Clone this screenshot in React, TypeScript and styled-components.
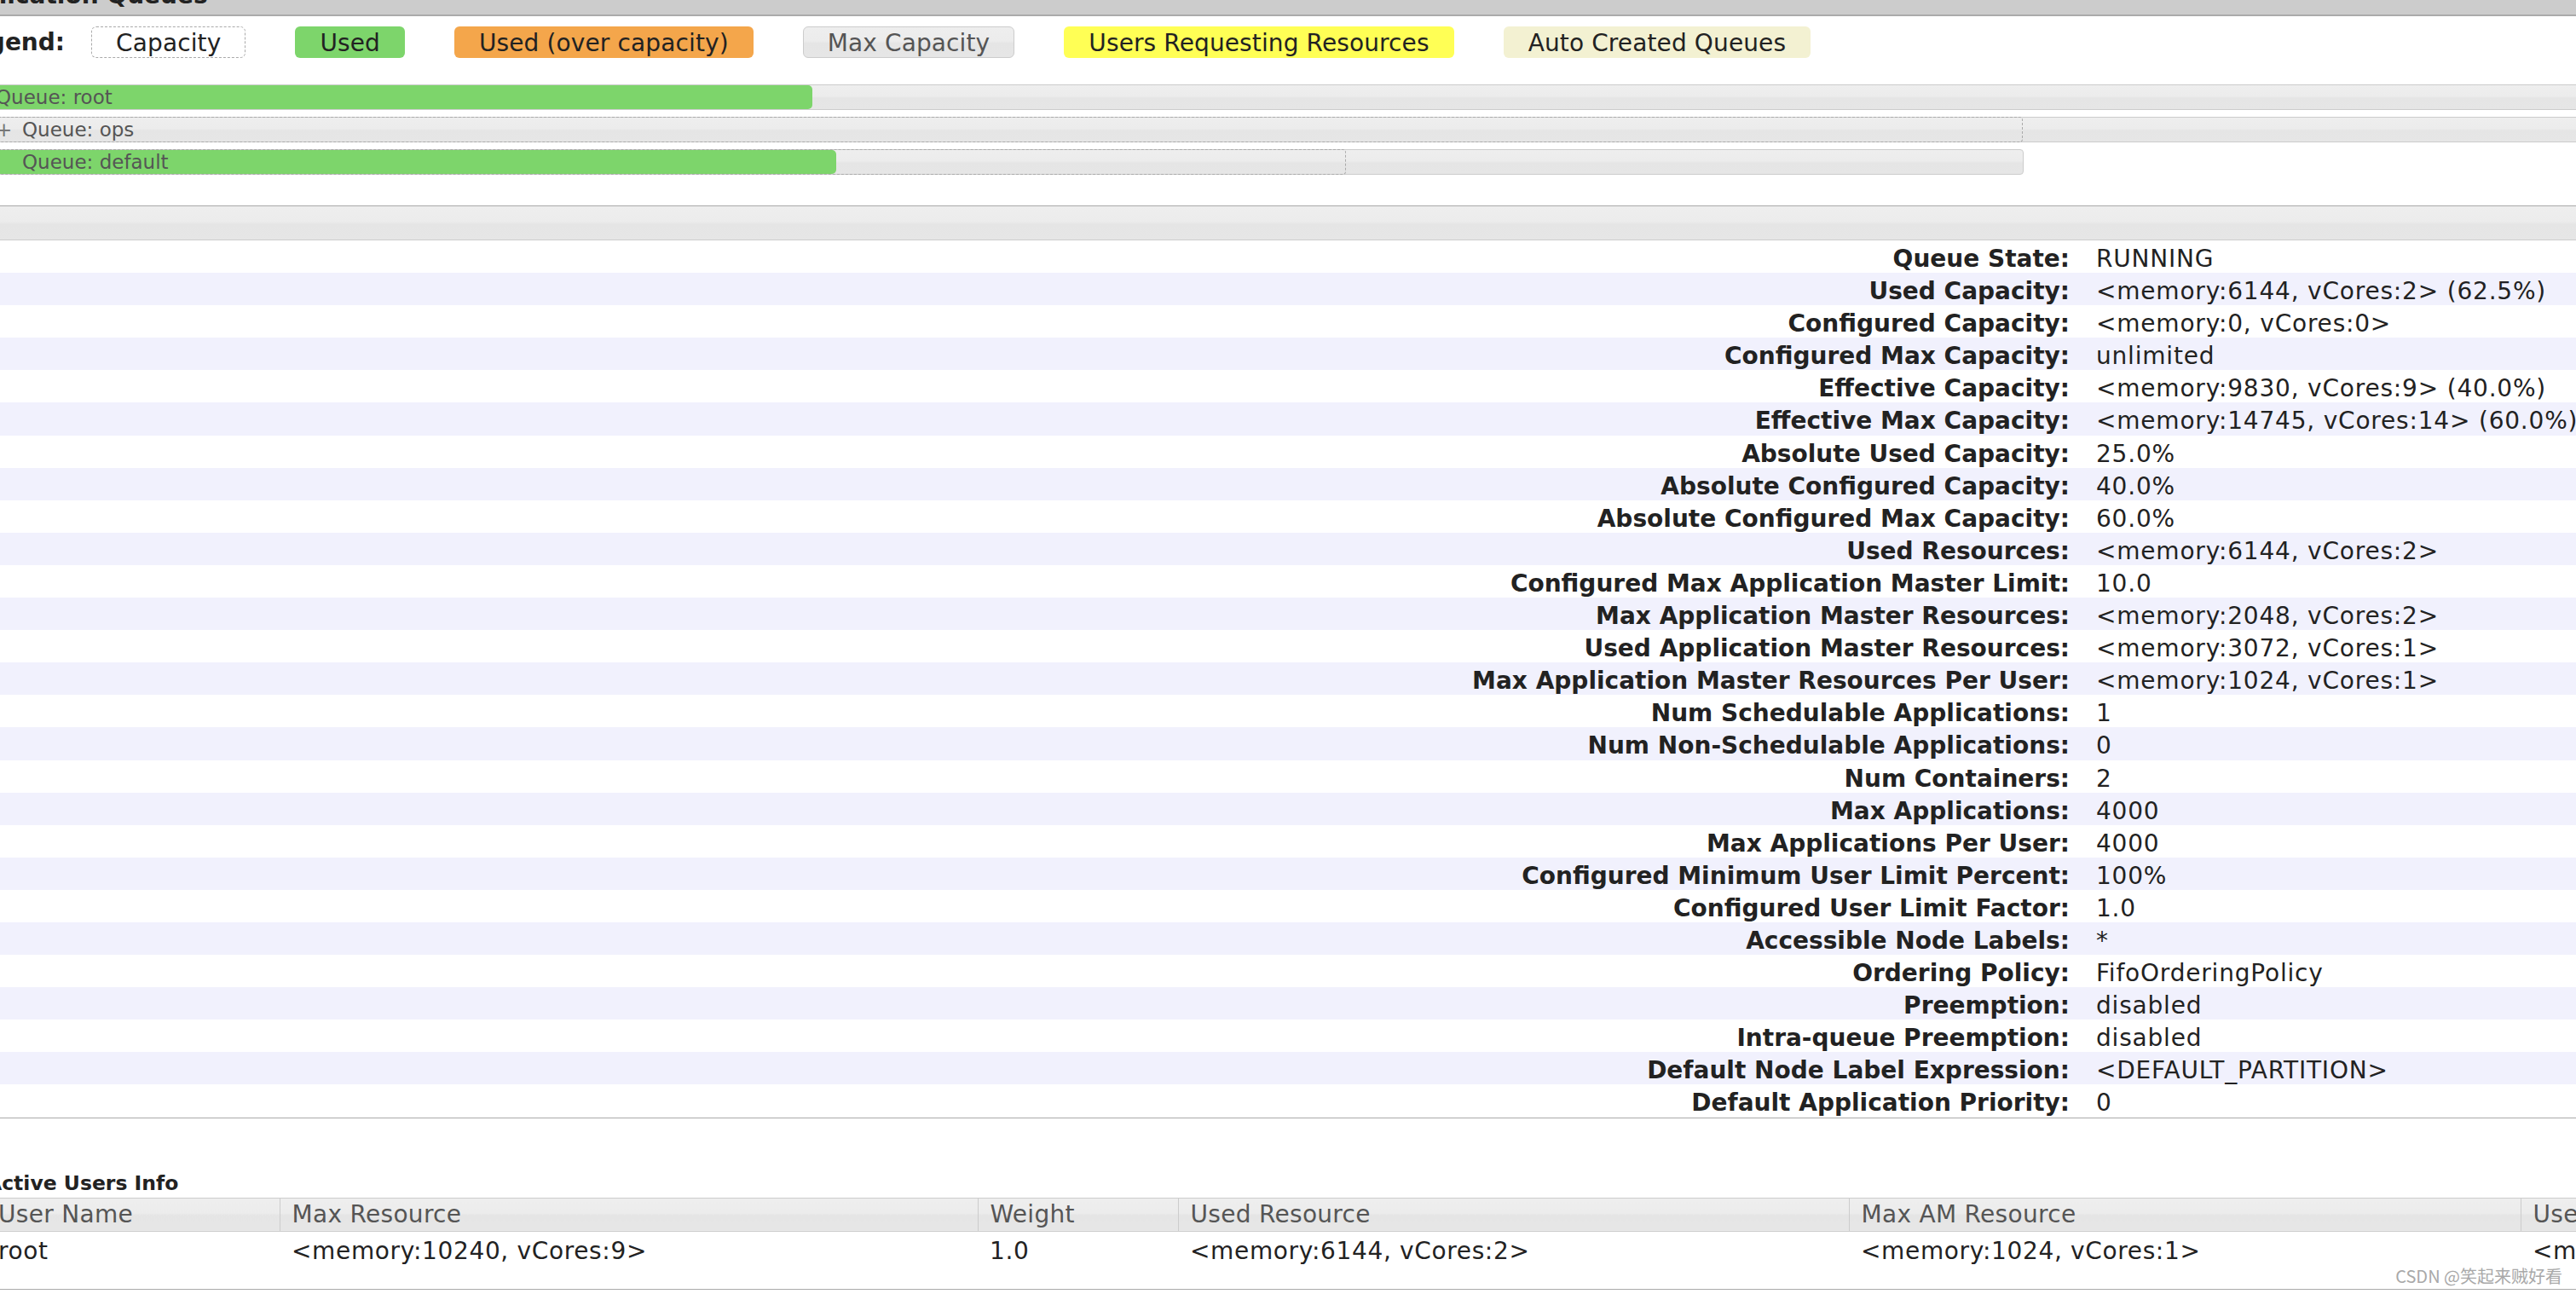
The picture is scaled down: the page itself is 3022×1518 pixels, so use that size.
import React from 'react';
import styled, { createGlobalStyle, css } from 'styled-components';

const fontFamily = '"DejaVu Sans", Verdana, "Noto Sans CJK SC", sans-serif';
const gray1 = '#222';
const gray2 = '#555';
const gray3 = '#777';
const borderLight = '#ccc';
const borderDark = '#aaa';
const green = '#7dd56b';
const stripe = '#f1f1fd';
const barGradient =
  'linear-gradient(to bottom, #eeeeee 0%, #ececec 46%, #e5e5e5 54%, #e6e6e6 100%)';

const GlobalStyle = createGlobalStyle`
  html, body {
    margin: 0;
    padding: 0;
    background: #fff;
  }
  body {
    overflow: hidden;
    font-family: ${fontFamily};
    color: ${gray1};
  }
`;

const Viewport = styled.div`
  position: relative;
  width: 3022px;
  height: 1518px;
  overflow: hidden;
`;

const Page = styled.div`
  width: 4100px;
  margin-left: -51px;
`;

const TitleBar = styled.div`
  height: 17px;
  background: ${borderLight};
  border-bottom: 2px solid ${borderDark};
  overflow: hidden;
`;

const Title = styled.h3`
  margin: -19px 0 0 -12px;
  font: bold 28px/28px ${fontFamily};
  color: ${gray1};
  white-space: nowrap;
`;

/* legend */

type LegendKind = 'capacity' | 'used' | 'over' | 'max' | 'requesting' | 'auto';

const legendKinds: Record<LegendKind, ReturnType<typeof css>> = {
  capacity: css`
    background: #fff;
    border: 1px dashed ${borderDark};
  `,
  used: css`
    background: ${green};
  `,
  over: css`
    background: #f4a64b;
  `,
  max: css`
    background: ${barGradient};
    border: 1px solid ${borderLight};
    color: ${gray2};
  `,
  requesting: css`
    background: #ffff55;
  `,
  auto: css`
    background: #f3f1d2;
  `
};

const Legend = styled.ul`
  display: flex;
  align-items: center;
  list-style: none;
  margin: 12px 0 0;
  padding: 0;
  height: 37px;
  font-size: 28px;
`;

const LegendLabel = styled.li`
  font-weight: bold;
  margin-right: 31px;
`;

const LegendItem = styled.li<{ $kind: LegendKind }>`
  box-sizing: border-box;
  height: 37px;
  line-height: 37px;
  padding: 0 28px;
  margin-right: 58px;
  border: 1px solid transparent;
  border-radius: 6px;
  color: ${gray1};
  letter-spacing: 0.12px;
  white-space: nowrap;
  ${props => legendKinds[props.$kind]}
`;

/* queue bars */

const QueueList = styled.ul`
  list-style: none;
  margin: 31px 0 0;
  padding: 0 0 0 35px;
`;

const QueueRow = styled.li`
  position: relative;
  height: 30px;
  margin-bottom: 8px;
`;

interface IWidthProps {
  $w: number;
}

const MaxTrack = styled.div<IWidthProps>`
  box-sizing: border-box;
  width: ${props => props.$w}px;
  height: 30px;
  border: 1px solid ${borderLight};
  border-radius: 4px;
  background: ${barGradient};
`;

const CapacityBox = styled.div<IWidthProps>`
  position: absolute;
  left: 0;
  top: 0;
  box-sizing: border-box;
  width: ${props => props.$w}px;
  height: 30px;
  border: 1px dashed ${borderDark};
  border-radius: 4px;
`;

const UsedFill = styled.div<IWidthProps>`
  position: absolute;
  left: 0;
  top: 1px;
  width: ${props => props.$w}px;
  height: 28px;
  background: ${green};
  border-radius: 0 5px 5px 0;
`;

const QueueLabel = styled.span`
  position: absolute;
  left: 11px;
  top: 1px;
  line-height: 28px;
  font-size: 23px;
  color: ${gray2};
  white-space: nowrap;
`;

const Expander = styled.span`
  display: inline-block;
  width: 31px;
  color: ${gray3};
`;

/* queue info */

const InfoSection = styled.div`
  margin: 36px 0 0 35px;
`;

const SectionBar = styled.div`
  height: 39px;
  border-top: 1px solid ${borderDark};
  border-bottom: 1px solid ${borderLight};
  background: ${barGradient};
`;

const InfoList = styled.div`
  border-bottom: 1px solid ${borderDark};
`;

const InfoRow = styled.div`
  display: grid;
  grid-template-columns: 2459px 1fr;
  box-sizing: border-box;
  height: 38.1px;
  padding-top: 3px;
  line-height: 37px;
  font-size: 28px;
  &:nth-child(even) {
    background: ${stripe};
  }
`;

const InfoLabel = styled.div`
  text-align: right;
  padding-right: 15px;
  font-weight: bold;
  white-space: nowrap;
`;

const InfoValue = styled.div`
  padding-left: 16px;
  letter-spacing: 0.8px;
  white-space: nowrap;
`;

/* active users */

const Caption = styled.div`
  margin-top: 63px;
  font-size: 23.5px;
  line-height: 26px;
  font-weight: bold;
`;

const UsersTable = styled.table`
  margin-top: 4px;
  border-collapse: collapse;
  table-layout: fixed;
  width: 3673px;
  font-size: 28px;
`;

const HeadCell = styled.th`
  padding: 0 14px;
  height: 38px;
  line-height: 38px;
  text-align: left;
  font-weight: normal;
  color: ${gray2};
  letter-spacing: 0.3px;
  background: ${barGradient};
  border-top: 1px solid ${borderLight};
  border-bottom: 1px solid ${borderLight};
  border-left: 1px solid ${borderLight};
  white-space: nowrap;
  overflow: hidden;
  &:first-child {
    border-left: none;
  }
`;

const BodyCell = styled.td`
  padding: 5px 14px 26px;
  line-height: 36px;
  color: ${gray1};
  letter-spacing: 0.65px;
  border-bottom: 1px solid ${borderDark};
  white-space: nowrap;
  overflow: hidden;
`;

const Watermark = styled.div`
  position: absolute;
  right: 16px;
  bottom: 7px;
  font-family: "Noto Sans CJK SC", "Noto Sans", sans-serif;
  font-size: 20px;
  color: #a9a9a9;
  white-space: nowrap;
`;

interface IQueue {
  name: string;
  max: number;
  capacity?: number;
  used: number;
  expander?: string;
}

const queues: IQueue[] = [
  { name: 'root', max: 3987, used: 969 },
  { name: 'ops', max: 3987, capacity: 2389, used: 0, expander: '+' },
  { name: 'default', max: 2390, capacity: 1595, used: 997, expander: '' }
];

const info: [string, string][] = [
  ['Queue State:', 'RUNNING'],
  ['Used Capacity:', '<memory:6144, vCores:2> (62.5%)'],
  ['Configured Capacity:', '<memory:0, vCores:0>'],
  ['Configured Max Capacity:', 'unlimited'],
  ['Effective Capacity:', '<memory:9830, vCores:9> (40.0%)'],
  ['Effective Max Capacity:', '<memory:14745, vCores:14> (60.0%)'],
  ['Absolute Used Capacity:', '25.0%'],
  ['Absolute Configured Capacity:', '40.0%'],
  ['Absolute Configured Max Capacity:', '60.0%'],
  ['Used Resources:', '<memory:6144, vCores:2>'],
  ['Configured Max Application Master Limit:', '10.0'],
  ['Max Application Master Resources:', '<memory:2048, vCores:2>'],
  ['Used Application Master Resources:', '<memory:3072, vCores:1>'],
  ['Max Application Master Resources Per User:', '<memory:1024, vCores:1>'],
  ['Num Schedulable Applications:', '1'],
  ['Num Non-Schedulable Applications:', '0'],
  ['Num Containers:', '2'],
  ['Max Applications:', '4000'],
  ['Max Applications Per User:', '4000'],
  ['Configured Minimum User Limit Percent:', '100%'],
  ['Configured User Limit Factor:', '1.0'],
  ['Accessible Node Labels:', '*'],
  ['Ordering Policy:', 'FifoOrderingPolicy'],
  ['Preemption:', 'disabled'],
  ['Intra-queue Preemption:', 'disabled'],
  ['Default Node Label Expression:', '<DEFAULT_PARTITION>'],
  ['Default Application Priority:', '0']
];

const userColumns: [string, number][] = [
  ['User Name', 344],
  ['Max Resource', 819],
  ['Weight', 235],
  ['Used Resource', 787],
  ['Max AM Resource', 788],
  ['Used AM Resource', 700]
];

const userRow = [
  'root',
  '<memory:10240, vCores:9>',
  '1.0',
  '<memory:6144, vCores:2>',
  '<memory:1024, vCores:1>',
  '<memory:3072, vCores:1>'
];

const legend: [LegendKind, string][] = [
  ['capacity', 'Capacity'],
  ['used', 'Used'],
  ['over', 'Used (over capacity)'],
  ['max', 'Max Capacity'],
  ['requesting', 'Users Requesting Resources'],
  ['auto', 'Auto Created Queues']
];

const App: React.FC = () => (
  <Viewport>
    <GlobalStyle />
    <Page>
      <TitleBar>
        <Title>Application Queues</Title>
      </TitleBar>

      <Legend>
        <LegendLabel>Legend:</LegendLabel>
        {legend.map(([kind, text]) => (
          <LegendItem key={kind} $kind={kind}>
            {text}
          </LegendItem>
        ))}
      </Legend>

      <QueueList>
        {queues.map(q => (
          <QueueRow key={q.name}>
            <MaxTrack $w={q.max} />
            {q.capacity !== undefined && <CapacityBox $w={q.capacity} />}
            {q.used > 0 && <UsedFill $w={q.used} />}
            <QueueLabel>
              {q.expander !== undefined && <Expander>{q.expander}</Expander>}
              Queue: {q.name}
            </QueueLabel>
          </QueueRow>
        ))}
      </QueueList>

      <InfoSection>
        <SectionBar />
        <InfoList>
          {info.map(([label, value]) => (
            <InfoRow key={label}>
              <InfoLabel>{label}</InfoLabel>
              <InfoValue>{value}</InfoValue>
            </InfoRow>
          ))}
        </InfoList>

        <Caption>Active Users Info</Caption>
        <UsersTable>
          <colgroup>
            {userColumns.map(([name, width]) => (
              <col key={name} style={{ width }} />
            ))}
          </colgroup>
          <thead>
            <tr>
              {userColumns.map(([name]) => (
                <HeadCell key={name}>{name}</HeadCell>
              ))}
            </tr>
          </thead>
          <tbody>
            <tr>
              {userRow.map((cell, i) => (
                <BodyCell key={i}>{cell}</BodyCell>
              ))}
            </tr>
          </tbody>
        </UsersTable>
      </InfoSection>
    </Page>
    <Watermark>CSDN @笑起来贼好看</Watermark>
  </Viewport>
);

export default App;
